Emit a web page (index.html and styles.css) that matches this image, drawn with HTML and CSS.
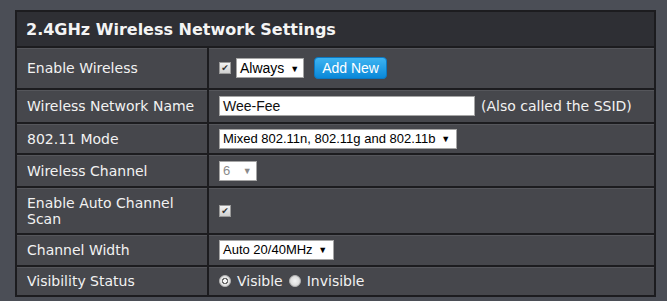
FILE: index.html
```html
<!DOCTYPE html>
<html>
<head>
  <title>Wireless Settings</title>
  <link rel="stylesheet" href="styles.css">
</head>
<body>
  <table class="settings">
    <tr class="head">
      <th colspan="2">2.4GHz Wireless Network Settings</th>
    </tr>
    <tr class="r1">
      <td class="label">Enable Wireless</td>
      <td>
        <div class="field">
          <span class="check">&#10004;</span>
          <span class="select sel-always">Always <span class="arrow">&#9660;</span></span>
          <span class="btn">Add New</span>
        </div>
      </td>
    </tr>
    <tr class="r2">
      <td class="label">Wireless Network Name</td>
      <td>
        <div class="field">
          <span class="text-input">Wee-Fee</span>
          <span class="note">(Also called the SSID)</span>
        </div>
      </td>
    </tr>
    <tr class="r3">
      <td class="label">802.11 Mode</td>
      <td>
        <div class="field">
          <span class="select sel-mode">Mixed 802.11n, 802.11g and 802.11b <span class="arrow">&#9660;</span></span>
        </div>
      </td>
    </tr>
    <tr class="r4">
      <td class="label">Wireless Channel</td>
      <td>
        <div class="field">
          <span class="select sel-channel disabled">6 <span class="arrow">&#9660;</span></span>
        </div>
      </td>
    </tr>
    <tr class="r5">
      <td class="label">Enable Auto Channel Scan</td>
      <td>
        <div class="field">
          <span class="check">&#10004;</span>
        </div>
      </td>
    </tr>
    <tr class="r6">
      <td class="label">Channel Width</td>
      <td>
        <div class="field">
          <span class="select sel-width">Auto 20/40MHz <span class="arrow">&#9660;</span></span>
        </div>
      </td>
    </tr>
    <tr class="r7">
      <td class="label">Visibility Status</td>
      <td>
        <div class="field radios">
          <span class="radio on"></span><span class="radio-text">Visible</span>
          <span class="radio"></span><span class="radio-text">Invisible</span>
        </div>
      </td>
    </tr>
  </table>
</body>
</html>
```

FILE: styles.css
```css
body {
  margin: 0;
  background-color: #4b4e56;
  font-family: "DejaVu Sans", Verdana, sans-serif;
  font-size: 14px;
  color: #f2f2f2;
}

.settings {
  border-collapse: collapse;
  margin: 10px 0 0 15px;
  width: 641px;
  border: 2px solid #1c1c1f;
}

.head th {
  height: 34px;
  padding: 0 0 0 9px;
  text-align: left;
  background-color: #2e2f34;
  color: #f4f4f4;
  font-size: 16px;
  font-weight: bold;
  border-bottom: 2px solid #1c1c1f;
}

td {
  background-color: #46474c;
  border-top: 2px solid #1c1c1f;
  box-shadow: inset 0 1px 0 #55565b;
  padding: 0 10px;
  vertical-align: middle;
}

td.label {
  width: 170px;
  border-right: 2px solid #1c1c1f;
  line-height: 16px;
}

.r1 td { height: 40px; }
.r2 td { height: 32px; }
.r3 td { height: 29px; }
.r4 td { height: 31px; }
.r5 td { height: 45px; }
.r6 td { height: 30px; }
.r7 td { height: 28px; }

.field {
  display: flex;
  align-items: center;
}

/* greyed checkbox like the router page */
.check {
  display: inline-block;
  width: 10px;
  height: 10px;
  border: 1px solid #9a9a9a;
  background: linear-gradient(#f2f2f2, #cfcfcf);
  color: #333;
  font-size: 9px;
  line-height: 10px;
  text-align: center;
  margin-right: 5px;
}

.select {
  display: inline-block;
  white-space: nowrap;
  height: 18px;
  line-height: 18px;
  padding: 0 6px 0 3px;
  background-color: #fff;
  border: 1px solid #a5a5a5;
  color: #000;
  font-family: "Liberation Sans", Arial, sans-serif;
  font-size: 13px;
}

.sel-always {
  font-size: 14px;
  padding-right: 4px;
}

.arrow {
  font-size: 9px;
  margin-left: 2px;
  vertical-align: 1px;
}

.disabled {
  color: #8a8a8a;
}

.sel-channel {
  width: 27px;
}

.sel-channel .arrow {
  margin-left: 9px;
}

.btn {
  display: inline-block;
  margin-left: 10px;
  height: 20px;
  line-height: 20px;
  padding: 0 7px;
  border: 1px solid #0b78c2;
  border-radius: 4px;
  background: linear-gradient(#3db4f2, #0a88d8);
  color: #fff;
  font-family: "Liberation Sans", Arial, sans-serif;
  font-size: 14px;
}

.text-input {
  display: inline-block;
  width: 248px;
  height: 18px;
  line-height: 18px;
  padding: 0 3px;
  background-color: #fff;
  border: 1px solid #a5a5a5;
  color: #111;
  font-family: "Liberation Sans", Arial, sans-serif;
  font-size: 14px;
}

.note {
  margin-left: 6px;
}

.radio {
  display: inline-block;
  width: 10px;
  height: 10px;
  border-radius: 50%;
  border: 1px solid #b0b0b0;
  background: radial-gradient(#f4f4f4, #cfcfcf);
}

.radio.on {
  background: radial-gradient(circle, #f6f6f6 0 2px, #6c6c6c 2px 3px, #e4e4e4 3px);
}

.radio-text {
  margin: 0 6px 0 6px;
}
```
